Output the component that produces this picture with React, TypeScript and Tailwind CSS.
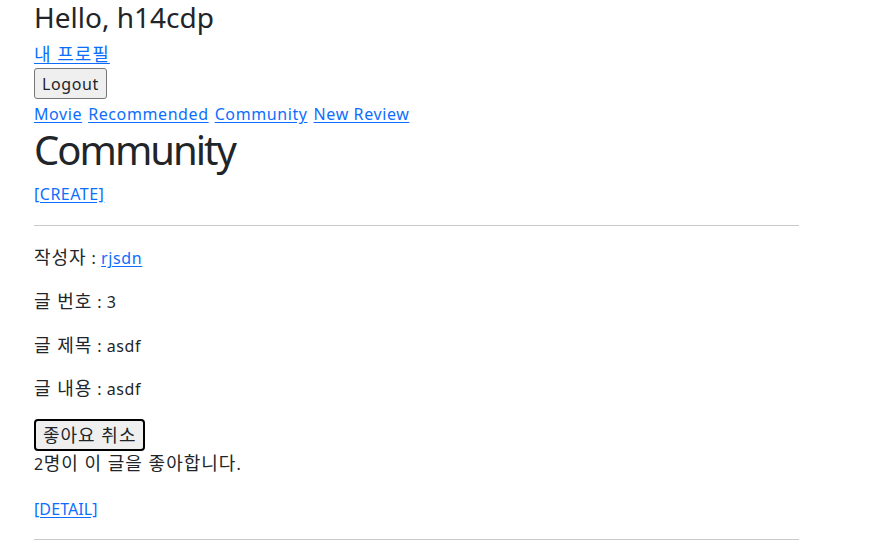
import React from 'react';

const font = { fontFamily: '"Noto Sans", "Noto Sans CJK KR", sans-serif' };

const link = 'text-[#0d6efd] underline underline-offset-2';

// Korean runs are set a bit larger to match the wider hangul of the original
const K: React.FC<{ children: React.ReactNode }> = ({ children }) => (
  <span className="text-[18px] tracking-[1px]">{children}</span>
);

const Post: React.FC = () => {
  return (
    <div className="tracking-[0.6px]">
      <p className="h-[24px] leading-[24px] mt-[19px]">
        <K>작성자</K> : <a href="#" className={link}>rjsdn</a>
      </p>
      <p className="h-[24px] leading-[24px] mt-[20px]"><K>글 번호</K> : 3</p>
      <p className="h-[24px] leading-[24px] mt-[20px]"><K>글 제목</K> : asdf</p>
      <p className="h-[24px] leading-[24px] mt-[19px]"><K>글 내용</K> : asdf</p>
      <button className="mt-[19px] h-[32px] px-[7px] bg-[#efefef] border-2 border-black rounded-[4px] leading-[24px]">
        <K>좋아요 취소</K>
      </button>
      <p className="h-[24px] leading-[24px]">2<K>명이 이 글을 좋아합니다</K>.</p>
      <p className="h-[24px] leading-[24px] mt-[22px] tracking-[0.1px]">
        <a href="#" className={link}>[DETAIL]</a>
      </p>
      <hr className="mt-[18px] border-t border-[#c8c9ca]" />
    </div>
  );
};

const App: React.FC = () => {
  return (
    <div className="w-[880px] h-[545px] bg-white text-[#212529] text-[16px] overflow-hidden" style={font}>
      <div className="ml-[34px] w-[765px]">
        <h3 className="text-[28px] h-[34px] leading-[34px]">Hello, h14cdp</h3>
        <div className="mt-[8px] h-[24px] leading-[24px]">
          <a href="#" className={link}><K>내 프로필</K></a>
        </div>
        <button className="mt-[2px] h-[31px] px-[7px] bg-[#efefef] border border-[#767676] rounded-[3px] leading-[24px] tracking-[0.6px]">
          Logout
        </button>
        <nav className="mt-[3px] h-[24px] leading-[24px] flex gap-[6px] tracking-[0.6px]">
          <a href="#" className={link}>Movie</a>
          <a href="#" className={link}>Recommended</a>
          <a href="#" className={link}>Community</a>
          <a href="#" className={link}>New Review</a>
        </nav>
        <h1 className="text-[40px] h-[48px] leading-[48px] tracking-[-2px]">Community</h1>
        <div className="mt-[8px] h-[24px] leading-[24px] tracking-[0.5px]">
          <a href="#" className={link}>[CREATE]</a>
        </div>
        <hr className="mt-[19px] border-t border-[#c8c9ca]" />
        <Post />
      </div>
    </div>
  );
};

export default App;
